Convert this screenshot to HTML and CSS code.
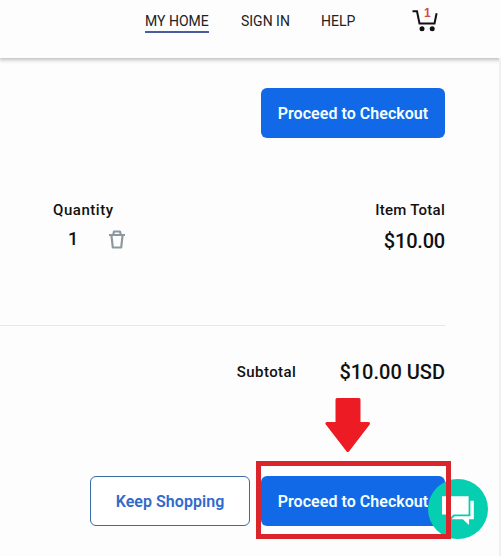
FILE: index.html
```html
<!doctype html>
<html lang="en">
  <head>
    <meta charset="UTF-8" />
    <meta name="viewport" content="width=device-width, initial-scale=1.0" />
    <title>Shopping Cart</title>
    <link rel="stylesheet" href="styles.css" />
  </head>
  <body>
    <header class="header">
      <nav class="nav">
        <a href="#" class="nav-home active">MY HOME</a>
        <a href="#" class="nav-signin">SIGN IN</a>
        <a href="#" class="nav-help">HELP</a>
      </nav>
      <a href="#" class="cart" aria-label="Cart">
        <svg width="26" height="24" viewBox="0 0 26 24">
          <path d="M0.5 3.3H5L7.5 15.5H22.5L24.6 5.3" fill="none" stroke="#111" stroke-width="2" />
          <circle cx="10" cy="20.7" r="2.5" fill="#111" />
          <circle cx="20.2" cy="20.7" r="2.5" fill="#111" />
        </svg>
        <span class="cart-count">1</span>
      </a>
    </header>

    <main class="page">
      <div class="top-actions">
        <button class="btn btn-primary">Proceed to Checkout</button>
      </div>

      <section class="item">
        <div class="quantity">
          <div class="label quantity-label">Quantity</div>
          <div class="quantity-row">
            <span class="quantity-value">1</span>
            <svg class="trash" width="16" height="19" viewBox="0 0 16 19">
              <path d="M0 5H16M4.2 5L5 1.5H11L11.8 5M2.4 5L3.8 17.5H12.2L13.6 5" fill="none" stroke="#8b999f" stroke-width="2.2" stroke-linejoin="round" />
            </svg>
          </div>
        </div>
        <div class="item-total">
          <div class="label item-label">Item Total</div>
          <div class="price item-price">$10.00</div>
        </div>
      </section>

      <section class="subtotal">
        <span class="label subtotal-label">Subtotal</span>
        <span class="price subtotal-price">$10.00 USD</span>
      </section>

      <div class="bottom-actions">
        <button class="btn btn-outline">Keep Shopping</button>
        <div class="checkout">
          <button class="btn btn-primary">Proceed to Checkout</button>
          <div class="chat">
            <svg width="60" height="60" viewBox="0 0 60 60">
              <circle cx="30" cy="30" r="30" fill="#05cfb0" />
              <path d="M14 17.3H40.6V35.6H25.5L21.5 39.5V35.6H14Z" fill="#fff" />
              <path d="M42.4 21.7H45.8V40.2H41V46L34.8 40.2H23.5L26.5 37.3H42.4Z" fill="#fff" />
            </svg>
          </div>
          <div class="highlight"></div>
          <svg class="arrow" width="46" height="55" viewBox="0 0 46 55">
            <path d="M12 1.5H34V25.5H43.5L22.8 52.5L2 25.5H12Z" fill="#ed1c24" stroke="#ed1c24" stroke-width="3" stroke-linejoin="round" />
          </svg>
        </div>
      </div>
    </main>
  </body>
</html>
```

FILE: styles.css
```css
* {
  box-sizing: border-box;
}
body {
  margin: 0;
  height: 556px;
  overflow: hidden;
  background-color: #fdfdfd;
  color: #111;
  font-family: Roboto, "Liberation Sans", sans-serif;
}
a {
  color: inherit;
  text-decoration: none;
}

/* Header */
.header {
  display: flex;
  height: 58px;
  padding: 8px 0 0 145px;
  background-color: #fdfdfd;
  box-shadow: 0 1px 4px 1px rgba(0, 0, 0, 0.25);
}
.nav {
  display: flex;
  width: 267px;
  padding-top: 4px;
  gap: 32px;
  color: #222;
  font-size: 14px;
  line-height: 18px;
  white-space: nowrap;
}
.nav a {
  height: 21px;
}
.nav-home {
  width: 64px;
}
.nav-signin {
  width: 48px;
}
.nav-help {
  width: 34px;
}
.active {
  border-bottom: 2px solid #4c5b9b;
}
.cart {
  position: relative;
  width: 26px;
  height: 24px;
}
.cart-count {
  position: absolute;
  top: -3px;
  left: 12px;
  color: #cf4a4e;
  font: bold 12px/16px "Liberation Sans", sans-serif;
}

/* Cart contents */
.page {
  width: 501px;
  height: 498px;
  padding: 30px 54px 0 0;
  border-right: 2px solid #f0f0f0;
}
.top-actions {
  display: flex;
  justify-content: flex-end;
  margin-right: 0;
}
.btn {
  height: 50px;
  padding: 0;
  border: none;
  border-radius: 6px;
  font-family: inherit;
  font-size: 16px;
  font-weight: 600;
  letter-spacing: 0.04px;
  white-space: nowrap;
  cursor: pointer;
}
.btn-primary {
  width: 184px;
  background-color: #1169e8;
  color: #f4ffff;
}
.btn-outline {
  width: 160px;
  border: 1px solid #3a6ba5;
  background-color: #fff;
  color: #3269cd;
}
.item {
  display: flex;
  justify-content: space-between;
  height: 188px;
  padding: 62px 0 0 53px;
  border-bottom: 1px solid #e6e8e8;
}
.label {
  font-size: 15px;
  font-weight: 500;
  line-height: 20px;
  white-space: nowrap;
}
.quantity-label {
  letter-spacing: 0.55px;
}
.item-label {
  letter-spacing: 0.25px;
}
.subtotal-label {
  letter-spacing: 0.45px;
}
.quantity-row {
  display: flex;
  align-items: center;
  height: 39px;
  padding-left: 15px;
}
.quantity-value {
  width: 41px;
  padding-bottom: 2px;
  font-size: 18px;
  font-weight: 500;
}
.item-total {
  text-align: right;
}
.price {
  font-size: 20px;
  font-weight: 500;
  line-height: 24px;
  white-space: nowrap;
}
.item-price {
  padding-top: 9px;
  letter-spacing: -0.2px;
}
.subtotal {
  display: flex;
  justify-content: flex-end;
  align-items: center;
  gap: 43px;
  height: 91px;
}
.bottom-actions {
  display: flex;
  justify-content: flex-end;
  gap: 11px;
  padding-top: 59px;
}
.checkout {
  position: relative;
}

/* Chat bubble and callout sit over the checkout button */
.chat {
  position: absolute;
  top: 3px;
  left: 167px;
  height: 60px;
}
.highlight {
  position: absolute;
  top: -15px;
  left: -5px;
  width: 195px;
  height: 78px;
  border: 5px solid #db252d;
}
.arrow {
  position: absolute;
  top: -78px;
  left: 64px;
}
```
